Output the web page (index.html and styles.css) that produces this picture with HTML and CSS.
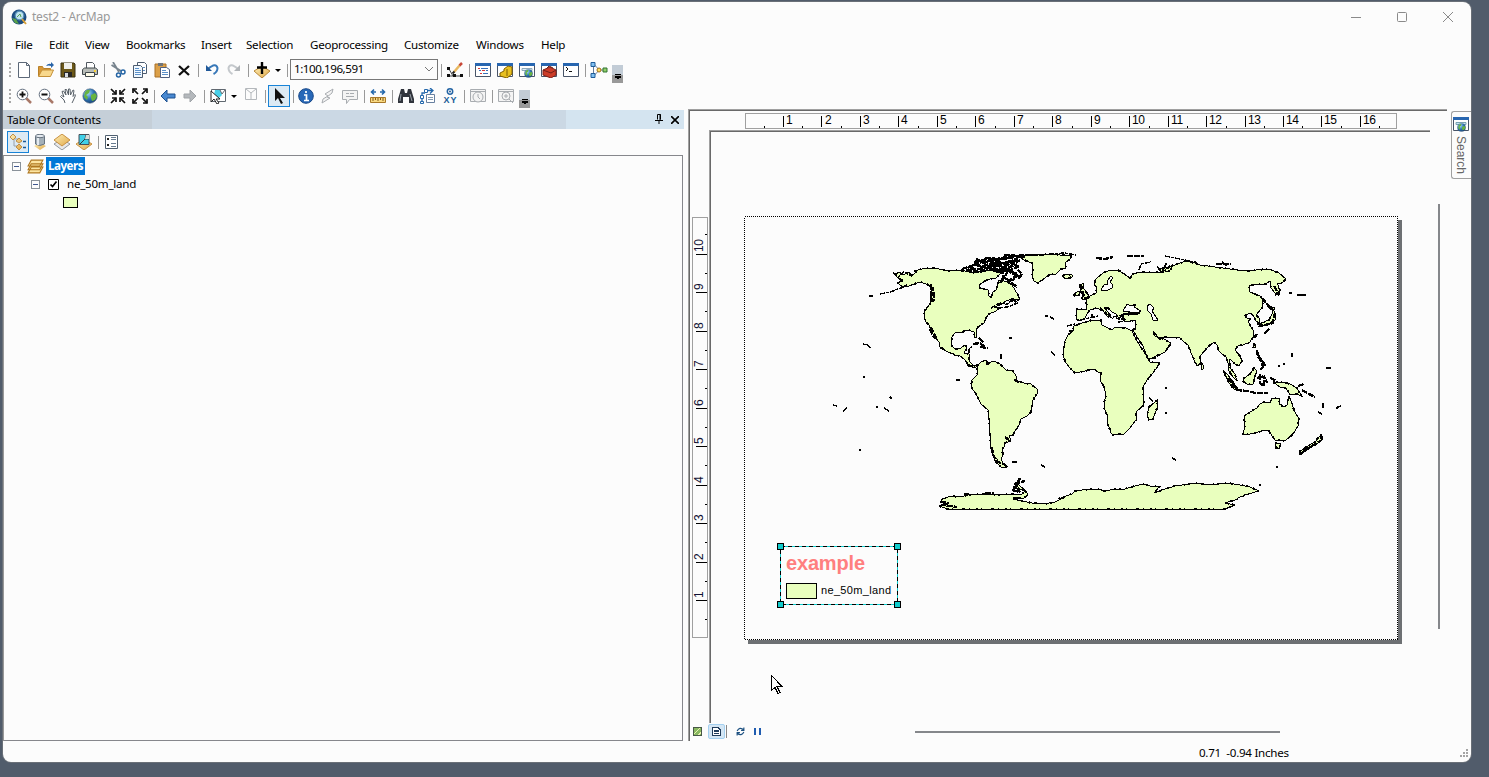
FILE: index.html
```html
<!DOCTYPE html>
<html lang="en">
<head>
<meta charset="utf-8">
<title>test2 - ArcMap</title>
<link rel="stylesheet" href="styles.css">
</head>
<body>
<svg class="defs" width="0" height="0">
  <defs>
    <linearGradient id="gold" x1="0" y1="0" x2="1" y2="1"><stop offset="0" stop-color="#fff0b8"/><stop offset="1" stop-color="#e0a848"/></linearGradient>
    <radialGradient id="globe" cx=".35" cy=".3" r=".8"><stop offset="0" stop-color="#a8dcf4"/><stop offset=".5" stop-color="#3076b8"/><stop offset="1" stop-color="#123a6a"/></radialGradient>
    <symbol id="i-globe" viewBox="0 0 16 16"><circle cx="8" cy="8" r="7.2" fill="url(#globe)" stroke="#486080" stroke-width=".6"/><path d="M3 4Q5 1 8 2L7 5 4 7 6 9 5 12 2 9zM9 7l4-2 2 3-2 4-3 1-1-3z" fill="#68b440"/></symbol>
    <symbol id="i-win" viewBox="0 0 16 16"><path d="M.5 1.500h15v13H.5z" fill="#fff" stroke="#485468"/><path d="M0 1h16v3H0z" fill="#2866b0"/></symbol>
  </defs>
</svg>
<div class="window">
  <header class="titlebar">
    <svg class="logo" viewBox="0 0 16 16"><circle cx="8" cy="8" r="7.500" fill="#1c4c80"/><path d="M1 9l3 5 4 1-3-5z" fill="#58a048"/><circle cx="8.500" cy="6.500" r="4.300" fill="#bfe4ee" stroke="#5890b8" stroke-width="1.200"/><path d="M6 8l3-3 1 3" fill="none" stroke="#58a058"/><path d="M11 10l4 5" stroke="#d8a038" stroke-width="2"/></svg>
    <h1 class="title">test2 - ArcMap</h1>
    <div class="controls">
      <svg viewBox="0 0 10 10"><path d="M0 5.500h10"/></svg>
      <svg viewBox="0 0 10 10"><rect x=".5" y=".5" width="9" height="9" rx="1"/></svg>
      <svg viewBox="0 0 10 10"><path d="M0 0l10 10M10 0L0 10"/></svg>
    </div>
  </header>
  <nav class="menu"><span>File</span><span>Edit</span><span>View</span><span>Bookmarks</span><span>Insert</span><span>Selection</span><span>Geoprocessing</span><span>Customize</span><span>Windows</span><span>Help</span></nav>

  <div class="toolbar">
    <i class="grip"></i>
    <b class="tool"><svg viewBox="0 0 16 16"><path d="M2.500.5h8l3 3v12h-11zM10.500.5v3h3" fill="#fff" stroke="#5c6878"/></svg></b>
    <b class="tool"><svg viewBox="0 0 16 16"><path d="M.5 14V4.500h4l1 2h7V8" fill="#d89838" stroke="#b88028"/><path d="M.5 14.500L4 8h11.500l-3 6.500z" fill="#f8d88c" stroke="#c49038"/><path d="M8 4q2-3 5-2V0l3 3-3 3V4q-2-1-5 0z" fill="#2864a8"/></svg></b>
    <b class="tool"><svg viewBox="0 0 16 16"><path d="M1 1h13l1 1v13H1z" fill="#6c5818" stroke="#383010"/><path d="M4 1h8v6H4z" fill="#f0f0ec"/><path d="M4 10h8v5H4z" fill="#282828"/><path d="M5 11h3v4H5z" fill="#d8dce0"/></svg></b>
    <b class="tool"><svg viewBox="0 0 16 16"><path d="M4.500 7V.5h6l2 2V7" fill="#fff" stroke="#505860"/><path d="M.5 7.500l2-1.500h11l2 1.500v5H.5z" fill="#b8bcb8" stroke="#40484c"/><path d="M3.500 10.500h9v4h-9z" fill="#fffce8" stroke="#40484c"/><path d="M12 8h2v2h-2z" fill="#f8d038"/></svg></b>
    <i class="sep"></i>
    <b class="tool"><svg viewBox="0 0 16 16"><path d="M3 0l6 10M1.500 3L11 9" stroke="#78848e" stroke-width="1.800"/><circle cx="8.500" cy="13" r="2" class="blue-line"/><circle cx="13" cy="10" r="2" class="blue-line"/></svg></b>
    <b class="tool"><svg viewBox="0 0 16 16"><path d="M5.500.5h7l2 2v9h-9z" fill="#fff" stroke="#4c5c70"/><path d="M1.500 3.500h7l2 2v10h-9z" fill="#f0f8ff" stroke="#4c5c70"/><path d="M3 6.500h4M3 8.500h6M3 10.500h6M3 12.500h6M11 5.500h2M11 8.500h2" stroke="#5c90c8"/></svg></b>
    <b class="tool"><svg viewBox="0 0 16 16"><path d="M1 2h11v13H1z" fill="#dca048" stroke="#a87028"/><path d="M4 1h5v3H4z" fill="#707478"/><path d="M6.500 5.500h6l3 2v8h-9z" fill="#fff" stroke="#506080"/><path d="M8 8.500h4M8 10.500h6M8 12.500h6" stroke="#5c90c8"/></svg></b>
    <b class="tool"><svg viewBox="0 0 16 16"><path d="M3 4l10 9M13 4L3 13" stroke="#111" stroke-width="2.300"/></svg></b>
    <i class="sep"></i>
    <b class="tool"><svg viewBox="0 0 16 16"><path d="M4 7Q12 0 13.500 6q0 4-4 6" fill="none" stroke="#3878b8" stroke-width="2"/><path d="M2 3v6h6z" fill="#205898"/></svg></b>
    <b class="tool"><svg viewBox="0 0 16 16"><path d="M12 7Q4 0 2.500 6q0 4 4 6" fill="none" stroke="#c4c8cc" stroke-width="2"/><path d="M14 3v6H8z" fill="#b0b4b8"/></svg></b>
    <i class="sep"></i>
    <b class="tool"><svg viewBox="0 0 16 16"><path d="M0 9l8-5 8 5-8 7z" fill="url(#gold)" stroke="#b88838"/><path d="M8 0v12M3 5.500h10" stroke="#000" stroke-width="2.400"/></svg></b>
    <b class="arrow"></b>
    <i class="sep"></i>
    <div class="combo"><span>1:100,196,591</span><svg viewBox="0 0 10 6"><path d="M1 1l4 4 4-4"/></svg></div>
    <i class="sep"></i>
    <b class="tool"><svg viewBox="0 0 16 16"><path d="M2 7l4 7M2 14h12" fill="none" stroke="#404448"/><path d="M0 5h3v3H0zM0 12h3v3H0zM6 12h3v3H6zM13 12h3v3h-3z" fill="#111"/><path d="M7 10l6-7" stroke="#e8b860" stroke-width="2.500"/><path d="M12.500 3.500L15 1" stroke="#c84838" stroke-width="2.500"/><path d="M5.500 11.500l2-2" stroke="#222" stroke-width="2"/></svg></b>
    <i class="sep"></i>
    <b class="tool"><svg viewBox="0 0 16 16"><use href="#i-win"/><path d="M3 6.500h2M7 8.500h3M5 11.500h2" stroke="#d83838"/><path d="M6 6.500h7M4 8.500h2M11 8.500h2M8 11.500h5" stroke="#3870b8"/></svg></b>
    <b class="tool"><svg viewBox="0 0 16 16"><use href="#i-win"/><path d="M3 11l4-2V7l4-3 4 1v7l-5 4-7-2z" fill="#e8c020" stroke="#806000"/><path d="M10 7v7" stroke="#806000"/></svg></b>
    <b class="tool"><svg viewBox="0 0 16 16"><use href="#i-win"/><path d="M3 6.500h10v2H3z" fill="#e0f0f8" stroke="#90a8b8"/><use href="#i-globe" x="5" y="7" width="9" height="9"/></svg></b>
    <b class="tool"><svg viewBox="0 0 16 16"><use href="#i-win"/><path d="M2 8l7-3 6 3v5l-5 3-8-3z" fill="#cc3c28" stroke="#802018"/><path d="M2 8l8 3 5-3M6 6l2-2 4 2" fill="none" stroke="#702018"/></svg></b>
    <b class="tool"><svg viewBox="0 0 16 16"><use href="#i-win"/><path d="M3 5l2 2-2 2M6 9.500h3" fill="none" stroke="#111"/></svg></b>
    <i class="sep"></i>
    <b class="tool wide"><svg viewBox="0 0 17 16"><path d="M3 5v7M4 3l5 5-5 5M9 8h6" fill="none" stroke="#667c98"/><path d="M.5.500h4v4h-4zM.5 11.500h4v4h-4z" fill="#80c0f0" stroke="#205c98"/><circle cx="8.500" cy="8" r="2" fill="#fce060" stroke="#a06c10"/><path d="M12.500 6h4v4h-4z" fill="#90d068" stroke="#307030"/></svg></b>
    <b class="overflow"></b>
  </div>

  <div class="toolbar second">
    <i class="grip"></i>
    <b class="tool"><svg viewBox="0 0 16 16"><path d="M10 10l5 5" stroke="#a87868" stroke-width="2.500"/><circle cx="6.500" cy="6.500" r="5.300" fill="#fff" stroke="#647080"/><path d="M3.500 6.500h6M6.500 3.500v6" stroke="#111" stroke-width="1.800"/></svg></b>
    <b class="tool"><svg viewBox="0 0 16 16"><path d="M10 10l5 5" stroke="#a87868" stroke-width="2.500"/><circle cx="6.500" cy="6.500" r="5.300" fill="#fff" stroke="#647080"/><path d="M3.500 6.500h6" stroke="#111" stroke-width="1.800"/></svg></b>
    <b class="tool"><svg viewBox="0 0 16 16"><path d="M5 15L4 12 .5 8.500l1-1L4 9 2 3.500 3.500 3 6 7 5 1.500h1.500L8.500 7V1H10l.5 6L13 2l1 .5-1 6 2-2 .5 1L13 13l-1 2" fill="#fff" stroke="#586068"/></svg></b>
    <b class="tool"><svg viewBox="0 0 16 16"><use href="#i-globe"/></svg></b>
    <i class="sep"></i>
    <b class="tool"><svg class="black" viewBox="0 0 16 16"><path d="M1 1l5 5M15 1l-5 5M1 15l5-5M15 15l-5-5"/><path d="M2 6h4V2M14 6h-4V2M2 10h4v4M14 10h-4v4"/></svg></b>
    <b class="tool"><svg class="black" viewBox="0 0 16 16"><path d="M1 1l5 5M15 1l-5 5M1 15l5-5M15 15l-5-5"/><path d="M1 5V1h4M15 5V1h-4M1 11v4h4M15 11v4h-4"/></svg></b>
    <i class="sep"></i>
    <b class="tool"><svg viewBox="0 0 16 16"><path d="M1 8l6-6v4h8v4H7v4z" fill="#4888d0" stroke="#1c5090"/></svg></b>
    <b class="tool"><svg viewBox="0 0 16 16"><path d="M14 8L8 2v4H2v4h6v4z" fill="#b4b8bc" stroke="#a0a4a8"/></svg></b>
    <i class="sep"></i>
    <b class="tool"><svg viewBox="0 0 16 16"><path d="M1.500 1.500h14v12h-14z" fill="#fff" stroke="#606870"/><path d="M5 2h5l2 5-4 4-4-4z" fill="#48d0e8"/><path d="M10 2l2 4 3-4" fill="none" stroke="#606870"/><path d="M1 3v11l3-3 3 5 2-1-3-4h4z" fill="#fff" stroke="#222"/></svg></b>
    <b class="arrow"></b>
    <b class="tool raised"><svg viewBox="0 0 16 16"><path d="M2.500 2.500h11v11h-11z M3 3l5 4 5-4M8 7v6" fill="none" stroke="#b4b8bc"/></svg></b>
    <i class="sep"></i>
    <b class="tool active"><svg viewBox="0 0 16 16"><path d="M4 0v13l3-3 3 6 2-1-3-5h5z" fill="#111"/></svg></b>
    <i class="sep narrow"></i>
    <b class="tool"><svg viewBox="0 0 16 16"><circle cx="8" cy="8" r="7.300" fill="#2868b8" stroke="#184888"/><path d="M8 3v2M6 7h2.500v5M6 12.500h5" fill="none" stroke="#fff" stroke-width="1.700"/></svg></b>
    <b class="tool"><svg class="dim" viewBox="0 0 16 16"><path d="M13 1L5 6l3 2-5 3-1 4 8-5-3-1 5-4z"/></svg></b>
    <b class="tool"><svg class="dim" viewBox="0 0 16 16"><path d="M.5 2.500h15v9h-8l-3 4v-4h-4zM4 5.500h3M8 5.500h4M4 8.500h8"/></svg></b>
    <i class="sep"></i>
    <b class="tool"><svg viewBox="0 0 16 16"><path d="M1 4h5M10 4h5M4 1.500L1.500 4 4 6.500M12 1.500L14.500 4 12 6.500" fill="none" stroke="#2468ac" stroke-width="1.600"/><path d="M.5 9.500h15v5H.5z" fill="#f8d880" stroke="#a87828"/><path d="M3 10v3M5.500 10v2M8 10v3M10.500 10v2M13 10v3" stroke="#805818"/></svg></b>
    <i class="sep"></i>
    <b class="tool"><svg viewBox="0 0 16 16"><path d="M3 1h3l1 4h2l1-4h3l3 10v4h-5V9H5v6H0v-4z" fill="#30343c"/><path d="M3 6L2 13M12 6l2 7" stroke="#98a0a8"/></svg></b>
    <b class="tool"><svg viewBox="0 0 16 16"><path d="M6.500 6.500h8v8h-8z" fill="#fff" stroke="#6880a0"/><path d="M2 14V5h3M7 2.500h5M10 0l3 2.500-3 3" fill="none" stroke="#2468ac" stroke-width="1.300"/><path d="M.5 7.500h3v3h-3zM.5 13.500h3v2h-3zM4.500 1.500h3v3h-3z" fill="#fff" stroke="#2468ac"/><path d="M8 9.500h5M8 11.500h5" stroke="#8098b0"/></svg></b>
    <b class="tool"><svg viewBox="0 0 16 16"><circle cx="8" cy="3.500" r="2.700" class="blue-line"/><circle cx="8" cy="3.500" r="1" fill="#205c98"/><text x="1.500" y="15" class="xy" textLength="13">XY</text></svg></b>
    <i class="sep"></i>
    <b class="tool"><svg class="dim" viewBox="0 0 16 16"><path d="M.5 1.500h15v12H.5zM.5 3.500h15"/><circle cx="8" cy="9" r="5"/><path d="M8 6v3l2 2"/></svg></b>
    <i class="sep"></i>
    <b class="tool"><svg class="dim" viewBox="0 0 16 16"><path d="M.5 1.500h15v12H.5zM.5 3.500h15"/><circle cx="8" cy="8" r="4"/><path d="M6 8h4M8 6v4M11 11l4 4"/></svg></b>
    <b class="overflow"></b>
  </div>

  <main class="work">
    <section class="toc">
      <div class="toc-head"><span>Table Of Contents</span>
        <svg class="pin" viewBox="0 0 8 10"><path d="M2.500 5.500v-5h3v5M5 0v6M0 6.500h8M4 6v4"/></svg>
        <svg class="close" viewBox="0 0 8 8"><path d="M0 0l8 8M8 0L0 8"/></svg>
      </div>
      <div class="toc-tools">
        <b class="tool active"><svg viewBox="0 0 16 16"><path d="M4 5v7h5M5 5h5" fill="none" stroke="#98a0a8"/><path d="M0 3l3-3 3 3-3 3zM6 7l3-3 3 3-3 2zM6 13l3-3 3 3-3 3z" fill="url(#gold)" stroke="#c09048"/><path d="M13 7.500h3M13 13.500h3" stroke="#185898" stroke-width="1.500"/></svg></b>
        <b class="tool"><svg viewBox="0 0 16 16"><path d="M2 12l6-3 6 3-6 4z" fill="url(#gold)"/><path d="M3.500 2v8q4 3 9 0V2" fill="#a4b0b8" stroke="#687480"/><ellipse cx="8" cy="2" rx="4.500" ry="1.700" fill="#e4eaf0" stroke="#687480"/><path d="M6 4v7" stroke="#e4eaf0" stroke-width="2"/></svg></b>
        <b class="tool"><svg viewBox="0 0 16 16"><path d="M0 10l8-5 8 5-8 6z" fill="#e8e8e8" stroke="#9098a0"/><path d="M0 6l8-6 8 6-8 6z" fill="url(#gold)" stroke="#c89040"/></svg></b>
        <b class="tool"><svg viewBox="0 0 16 16"><path d="M0 10l8-5 8 5-8 6z" fill="url(#gold)" stroke="#c89040"/><path d="M3 .5h10v10H3z" fill="#40d0e8" stroke="#485058"/><path d="M10 1L9 5l-5 5M13 5l-4 0" fill="none" stroke="#303840"/><path d="M10 1h3v4H9z" fill="#d8dcd8"/></svg></b>
        <i class="sep narrow"></i>
        <b class="tool"><svg viewBox="0 0 16 16"><path d="M2.500 1.500h12v13h-12z" fill="#fff" stroke="#506070"/><path d="M4 4h2v2H4zM4 10h2v2H4z" fill="#222"/><path d="M8 3.500h5M8 5.500h5M8 9.500h5M8 12.500h5" stroke="#687c90"/></svg></b>
      </div>
      <div class="tree">
        <div class="node"><i class="expander"></i><svg class="stack" viewBox="0 0 16 14"><path d="M4 7.500h11L12 13H1zM4 4.500h11L12 10H1zM4 1h11l-3 5.500H1z" fill="#fce4a0" stroke="#b07820"/></svg><span class="chosen">Layers</span></div>
        <div class="node child"><i class="expander"></i><svg class="check" viewBox="0 0 11 11"><path d="M.5.5h10v10H.5z" fill="#fff" stroke="#000"/><path d="M2.500 5.500l2 2 4-5" fill="none" stroke="#000" stroke-width="1.700"/></svg><span>ne_50m_land</span></div>
        <div class="node symbol"><i class="swatch"></i></div>
      </div>
    </section>

    <section class="view">
      <svg class="ruler-x" viewBox="690 111 740 19">
        <rect x="745.500" y="113.500" width="651" height="15"/>
        <path class="major-x" d="M783 121.500H1390"/><path class="minor-x" d="M764 126.500H1380"/>
        <text x="786" y="124">1</text><text x="825" y="124">2</text><text x="863" y="124">3</text><text x="901" y="124">4</text><text x="940" y="124">5</text><text x="978" y="124">6</text><text x="1017" y="124">7</text><text x="1055" y="124">8</text><text x="1094" y="124">9</text><text x="1132" y="124">10</text><text x="1171" y="124">11</text><text x="1209" y="124">12</text><text x="1248" y="124">13</text><text x="1286" y="124">14</text><text x="1324" y="124">15</text><text x="1363" y="124">16</text>
      </svg>
      <svg class="ruler-y" viewBox="690 130 19 593">
        <rect x="692.500" y="217.500" width="15" height="420"/>
        <path class="major-y" d="M701.500 601V240"/><path class="minor-y" d="M706 620V230"/>
        <g transform="translate(703 0) rotate(-90)"><text x="-598">1</text><text x="-560">2</text><text x="-521">3</text><text x="-483">4</text><text x="-444">5</text><text x="-406">6</text><text x="-367">7</text><text x="-329">8</text><text x="-290">9</text><text x="-252">10</text></g>
      </svg>
      <div class="canvas">
        <svg viewBox="711 132 719 591" width="719" height="591">
          <rect x="748" y="220" width="654" height="424" fill="#6d7073"/>
          <rect x="744.500" y="216.500" width="653" height="423" fill="#fcfcfc" stroke="#000" stroke-dasharray="1 1"/>
          <g class="map">
            <g id="land">
              <path d="M902 286L897 283 903 281 897 277 895 274 899 272 903 275 908 272 912 275 917 272 914 271 922 269 930 268 939 269 948 271 958 270 965 271 973 273 985 271 995 269 1001 273 996 278 990 279 985 281 979 285 980 288 988 290 989 296 991 297 993 292 996 290 998 284 998 280 1004 281 1008 282 1012 285 1015 290 1018 295 1020 300 1012 299 1006 301 1002 304 994 307 1000 307 996 311 989 314 986 318 984 323 978 327 976 331 977 337 975 338 974 332 968 330 962 332 955 333 952 337 951 345 955 349 961 348 965 345 967 348 964 353 969 354 969 361 973 365 979 365 974 368 968 364 964 359 960 356 955 355 946 351 940 347 939 342 934 336 931 330 929 325 926 322 924 317 925 310 930 304 931 300 930 294 932 289 929 285 920 282 914 284 909 286z"/>
              <path d="M1020 257L1029 255 1045 254 1060 255 1072 255 1070 259 1065 263 1066 268 1061 269 1056 274 1049 275 1042 280 1038 283 1034 281 1032 276 1033 270 1032 263 1024 260zM1062 276l5-2 5 1 0 2-6 2z"/>
              <path d="M977 366L981 362 986 360 988 363 994 361 1000 364 1006 370 1013 371 1016 376 1016 381 1024 383 1031 384 1037 389 1037 394 1033 400 1031 412 1027 416 1021 419 1019 425 1015 431 1013 435 1009 436 1011 440 1008 442 1004 443 1004 447 1002 450 1003 455 1001 459 1003 463 1007 467 1001 467 995 461 991 449 990 435 989 420 988 410 981 404 976 394 971 387 972 380 977 375z"/>
              <path d="M1079 324L1074 326 1073 331 1068 335 1065 341 1064 348 1063 356 1066 363 1070 368 1075 373 1085 371 1094 369 1098 372 1101 373 1100 380 1104 387 1106 395 1104 403 1104 408 1107 415 1108 424 1111 433 1113 435 1124 434 1130 428 1136 420 1136 412 1144 405 1143 394 1143 387 1147 380 1153 373 1158 366 1160 362 1150 362 1148 359 1145 353 1140 346 1135 337 1132 331 1126 328 1115 327 1112 330 1102 325 1101 320 1092 320z"/>
              <path d="M1133 330L1137 337 1143 346 1148 359 1152 358 1165 352 1171 343 1164 339 1158 337 1153 331 1155 336 1160 339 1166 337 1180 338 1184 342 1188 345 1191 353 1195 362 1197 366 1200 364 1200 356 1208 347 1214 342 1217 345 1219 351 1222 354 1226 357 1228 363 1229 371 1233 377 1237 381 1235 374 1231 369 1229 361 1230 359 1235 364 1239 366 1242 361 1240 356 1235 350 1238 346 1243 345 1250 342 1253 337 1254 332 1250 325 1248 321 1251 319 1247 318 1245 315 1251 313 1254 317 1256 321 1259 323 1260 319 1256 315 1262 308 1263 300 1260 296 1250 292 1249 286 1255 284 1266 284 1270 281 1271 288 1275 293 1279 295 1280 290 1277 283 1282 283 1286 279 1279 273 1269 269 1256 270 1245 271 1230 269 1215 267 1200 265 1195 263 1185 261 1178 264 1168 267 1158 269 1162 272 1150 272 1140 272 1133 274 1130 278 1118 270 1110 270 1103 273 1096 279 1094 284 1097 288 1096 293 1090 296 1086 299 1087 309 1076 309 1076 319 1080 321 1085 318 1087 314 1090 310 1097 308 1103 311 1108 317 1111 316 1104 307 1108 308 1112 312 1116 314 1119 319 1122 315 1124 313 1140 313 1138 314 1122 315 1122 319 1126 322 1135 320 1136 328z"/>
              <path d="M1243 435L1245 425 1244 416 1250 412 1257 408 1260 404 1264 402 1270 403 1272 398 1280 399 1279 404 1284 407 1287 405 1289 396 1291 401 1294 410 1299 419 1298 426 1293 434 1285 441 1275 440 1272 436 1269 431 1265 430 1258 432 1250 434zM1275 443l6 1-2 5-3-1zM1320 436l3 3-5 4-8 5-11 7 0-3 9-6 8-5 2-3z"/>
              <path d="M1223 371l5 4 5 7 5 7-4 0-5-6zM1243 379l7-5 4-6 3 3-2 5-2 8-6 0-4-3zM1273 382L1281 382 1290 384 1297 388 1299 392 1303 397 1297 394 1290 395 1286 388 1280 387zM1155 402l3-3-1 9-4 11-4 1-2-5 2-8zM1201 363l2 2 0 4-2 0z"/>
              <path d="M1080 285l4-2-1 4 3 5 4 5-3 2-5 0 1-4-3-4zM1075 293l4-2 0 4-5 1zM1273 309l2 4 0 7-4 3-6 2-6 2 2-4 8-3 3-6zM1270 307l4 0 1 2-5 1zM1253 344l3 1-1 3-2-1z"/>
              <path d="M941 500L950 496 960 497 968 495 985 494 998 495 1012 494 1022 494 1025 491 1018 488 1013 488 1018 484 1021 487 1025 490 1028 495 1024 498 1013 499 1022 501 1032 503 1044 504 1055 502 1065 497 1058 499 1072 494 1075 491 1082 490 1098 489 1105 491 1115 489 1125 489 1135 486 1143 484 1150 486 1160 486 1154 493 1165 489 1175 486 1190 484 1198 483 1206 485 1217 484 1228 483 1240 485 1250 487 1259 491 1248 494 1240 497 1235 500 1225 503 1235 505 1225 509 948 509 939 506 945 504z"/>
            </g>
            <use href="#land" class="coast"/>
            <g class="sea">
              <path d="M1123 311l4-7 4 2 5-2-2 3 7 4-3 2-8-1zM1147 306l3-2 4 4-2 3 6 9-5 0-2-6-4-4zM1111 276l-4 5 1 3-4 1-3 5 7 0 4-2 0-4-2-2 3-4z"/>
            </g>
            <path class="rough thick" d="M962 269l12-4 9 1 10-3 7 2 11-3 7-3-9-1-12 2-12 1-10 3-7 4 9 1 12-1 8 4 12-3 4-5 5 2M974 262l13-3 10 0 14-3 14 1M980 267l18-1 13 4 8-4M989 260l11-1-8 6 22-4-18 11 19-7M1000 273l7-3 8 5 4 3 3-4-4-4M1005 275l-5 8M1008 271l-4 7 7 3M1000 261l4 17M1011 260l-8 9 15 5-9 7 8 6"/>
            <path class="rough thick" d="M966 270l14 2 8-4 10 1M976 259l8 4 7-3 8 2M985 258l15 1 9-1M990 263l6 5M1004 255l16 1M1012 281l4-5 5 1M1005 262l15-2-8 5"/>
            <path class="rough" d="M869 296l4 0M880 294l10-2 11-4 6-3M893 273l6 4 4-5 9 4M991 308l8-5 8 1 5-4 6 3-11 4-8 1M1011 301l8-1M969 353v-4l3-2M1019 255h22l23-2 12 2M1165 256l15 3 15 3 3 3M1139 270l2-6 10-2M1157 267l6 5 7-1 3-6-11 7 5-10M1080 320l18-4M1100 308l8 6 4 5M1113 317l9-2 3 5-9-2M1118 322l7-1M1067 326l8-2M1092 314v4"/>
            <path class="rough thick" d="M931 284v14l3 3-1-14M931 299l2 3M930 329l3 7 4 3M931 327l6 13M973 344l7-1 6 5M980 347l8 1M979 338l5 5M1096 258l9 1 8-2M1127 256h17M1216 264l15 0M1222 262l5 4M1080 284l3 9 2 5 5-1M1275 295l4-3"/>
            <path class="rough thick" d="M1236 390l12 1 7 2 13 0M1228 378l6 8 5 5M1257 350l1 7 4 5 1 6M1258 355l7 10-5 5M1260 374v9l4 3 0-10 3 7M1257 378l8-2M1270 378l5 2 3 3M1298 386l6-2M1302 390l5 3 8 4M1257 324l8 1 8-2 2-11M1262 298l9 11M1254 338l3-4M1274 286l5 9M1019 498l-7 0M940 502l9 1-7 2 15 2M985 493h9M1012 490l8 2-4-7M1014 484l11-3M1020 478l-5 10M964 494h5M992 447l1 8 5 7 8 3M1005 437l4 3M1300 454l10-7 10-6M1321 434l1 7M967 365l8 2M986 364h3M1014 380l5 2"/>
            <path class="spots" d="M863 344l5 1 2 3M863 377h2M956 380h4M833 405l4 1M843 411l4-3M876 407h2M884 408l5 3M890 397l2 2M1045 316h3M1050 317l4 2M1051 352l4 3M861 450h-2M1012 462h5M1041 465l4 2M1172 458l4 2M1149 398l4 3M1165 388h2M1165 413h2M1289 293h3M1297 295h9M1292 353v4M1326 368h5M1318 412l4 2M1323 403v5M1336 409l2-2 3-1M1276 467h2M1278 366h2M1283 364h2M1009 338h3M1001 354v5M1260 484v2M1269 329l-5 5M1069 331h4M1152 358h4"/>
          </g>
          <g class="legend">
            <rect x="780.500" y="546.500" width="117" height="58" class="sel-base"/><rect x="780.500" y="546.500" width="117" height="58" class="sel-dash"/>
            <path class="handle" d="M777.500 543.500h6v6h-6zM894.500 543.500h6v6h-6zM777.500 601.500h6v6h-6zM894.500 601.500h6v6h-6z"/>
            <text x="786" y="570" class="heading" textLength="79">example</text>
            <rect x="786.500" y="583.500" width="30" height="15" class="patch"/>
            <text x="821" y="594" class="label" textLength="70">ne_50m_land</text>
          </g>
          <path d="M771.500 675.500v15l3.500-3 3 6 2-1-3-6h5z" fill="#fff" stroke="#000"/>
        </svg>
      </div>
      <div class="scroll-y"></div>
      <div class="viewbar">
        <svg viewBox="0 0 8 8" class="small"><path d="M.5.5h7v7h-7z" fill="#88b860" stroke="#485848"/><path d="M1 6l5-5M5 7l2-2" stroke="#e8f0b0"/></svg>
        <span class="mode"><svg viewBox="0 0 8 8" class="small"><path d="M.5.5h5l2 2v5h-7z" fill="#fff" stroke="#203c5c"/><path d="M2 3.500h4M2 5.500h4" stroke="#203c5c"/></svg></span>
        <i class="bar-line"></i>
        <svg viewBox="0 0 8 8" class="small soft"><path d="M1 3.500Q3-.5 7 2.500M7 .5v2.500H4.500M7 4.500Q5 8.500 1 5.500M1 7.500V5h2.500" fill="none" stroke="#1c5080"/></svg>
        <svg viewBox="0 0 8 8" class="small pause"><path d="M1 1h2v6H1zM5 1h2v6H5z" fill="#205cb0"/></svg>
        <i class="scroll-x"></i>
      </div>
    </section>
    <aside class="search"><svg viewBox="0 0 16 16"><use href="#i-win"/><path d="M3 6.500h10v2H3z" fill="#c8e8f0" stroke="#78a0b0"/><use href="#i-globe" x="4" y="7" width="9" height="9"/></svg><span>Search</span></aside>
  </main>
  <footer class="status"><span>0.71&nbsp; -0.94 Inches</span><svg viewBox="0 0 9 9"><path d="M6 0h2v2H6zM3 3h2v2H3zM6 3h2v2H6zM0 6h2v2H0zM3 6h2v2H3zM6 6h2v2H6z"/></svg></footer>
</div>
</body>
</html>
```

FILE: styles.css
```css
* { box-sizing: border-box; }
body { margin: 0; height: 777px; overflow: hidden; padding: 2px 0 0 3px; background: #515c6b; font: 11.600px/16px "Noto Sans", "Open Sans", sans-serif; letter-spacing: -.25px; color: #000; }
.defs { display: block; height: 0; }
.window { display: flex; flex-direction: column; width: 1468px; height: 760px; background: #fcfcfc; border-radius: 8px; box-shadow: 0 0 0 1px #6a7078; overflow: hidden; }
.titlebar { display: flex; align-items: center; height: 29px; padding-left: 8px; }
.logo { width: 16px; height: 16px; margin-right: 5px; }
.title { margin: 0; font-size: 12px; font-weight: 400; color: #999; letter-spacing: -.22px; }
.controls { display: flex; gap: 36px; margin-left: auto; margin-right: 18px; }
.controls svg { width: 10px; height: 10px; fill: none; stroke: #8a8a8a; }
.menu { display: grid; grid-template-columns: 34px 36px 41px 75px 45px 64px 94px 72px 65px 40px; height: 28px; align-items: center; padding-left: 12px; }
.toolbar { display: flex; height: 26px; align-items: flex-start; padding-left: 5px; }
.toolbar.second { height: 24px; }
.grip { width: 5px; height: 16px; margin-top: 4px; background: repeating-linear-gradient(#a8a8a8 0 2px, transparent 2px 4px) 1px 0 / 2px 100% no-repeat; }
.tool { display: flex; flex: none; width: 22px; height: 22px; align-items: center; justify-content: center; }
.tool svg { width: 16px; height: 16px; }
.tool.wide svg { width: 18px; }
.tool.active { background: #dceaf4; border: 1px solid #1883d7; }
.tool.raised { padding-bottom: 4px; }
.sep { flex: none; width: 6px; height: 13px; margin-top: 5px; background: linear-gradient(#999, #999) 3px 0 / 1px 100% no-repeat; }
.sep.narrow { width: 5px; }
.arrow { width: 11px; height: 22px; background: none; }
.arrow::before { content: ""; display: block; margin: 10px 0 0 2px; width: 0; border: 3px solid transparent; border-top-color: #000; border-bottom: 0; }
.combo { display: flex; width: 148px; height: 21px; align-items: center; justify-content: space-between; padding: 0 3px 1px 3px; border: 1px solid #777; letter-spacing: -.45px; }
.combo svg { width: 10px; height: 6px; fill: none; stroke: #777; }
.overflow { width: 11px; height: 18px; margin: 6px 0 0 2px; background: linear-gradient(#c2ccd6 10px, #999 10px); }
.second .overflow { margin: 5px 0 0 2px; }
.overflow::before { content: ""; display: block; width: 6px; height: 6px; margin: 9px 0 0 3px; background: linear-gradient(#000 0 0) 0 0 / 100% 1px no-repeat, linear-gradient(#000 0 0) 0 2px / 6px 2px no-repeat, linear-gradient(#000 0 0) 2px 4px / 2px 1px no-repeat; }
.blue-line { fill: none; stroke: #2464a4; stroke-width: 1.500; }
.black path { fill: none; stroke: #111; stroke-width: 1.700; }
.dim { fill: #f4f4f4; stroke: #a8acb0; }
.xy { font: bold 9px "Liberation Sans", sans-serif; fill: #205c98; letter-spacing: 0; }

.work { display: flex; height: 632px; }
.toc { display: flex; flex-direction: column; width: 681px; margin-top: 1px; }
.toc-head { display: flex; height: 19px; align-items: center; padding-left: 4px; padding-right: 5px; background: linear-gradient(90deg, #c5cfd8 149px, #cbd8e4 149px 563px, #d4e4f0 563px); letter-spacing: -.18px; }
.toc-head svg { fill: none; stroke: #000; }
.toc-head .pin { width: 8px; height: 10px; margin-left: auto; margin-right: 8px; margin-bottom: 1px; }
.toc-head .close { width: 8px; height: 8px; stroke-width: 1.600; }
.toc-tools { display: flex; height: 26px; align-items: center; padding-left: 4px; }
.toc-tools .sep { margin-top: 0; }
.tree { width: 680px; height: 586px; padding: 1px 0 0 7px; border: 1px solid #86878c; border-left-color: #999; }
.node { display: flex; height: 18px; align-items: center; }
.node.child { padding-left: 20px; }
.node.symbol { padding-left: 52px; }
.expander { width: 9px; height: 9px; margin: 1px 6px 0 1px; border: 1px solid #8a929a; background: linear-gradient(#405890, #405890) center / 5px 1px no-repeat; }
.child .expander { margin-left: 0; margin-right: 8px; }
.stack { width: 17px; height: 15px; margin-right: 2px; }
.chosen { padding: 1px 2px; background: #0078d7; color: #fff; font-weight: 700; letter-spacing: -.5px; }
.check { width: 11px; height: 11px; margin-right: 8px; }
.child span { letter-spacing: -.25px; }
.swatch { width: 15px; height: 11px; background: #e9ffbe; border: 1px solid #000; }

.view { display: grid; grid-template: 19px 593px 18px / 19px 721px 17px; width: 759px; height: 632px; margin-left: 4px; padding: 1px 0 0 1px; border: solid #a0a0a0; border-width: 1px 0 0 1px; box-shadow: inset 1px 1px 0 #696969; }
.ruler-x { grid-column: 1 / 4; grid-row: 1; width: 740px; height: 19px; }
.ruler-y { grid-column: 1; grid-row: 2; width: 19px; height: 593px; }
.view rect, .view path { shape-rendering: crispEdges; }
.view .soft path { shape-rendering: auto; }
.ruler-x rect, .ruler-y rect { fill: none; stroke: #a0a0a0; }
.ruler-x text, .ruler-y text { font: 12px "Liberation Sans", Arial, sans-serif; letter-spacing: -.4px; }
.ruler-y text { fill: #113; }
.ruler-x path, .ruler-y path { fill: none; stroke: #000; stroke-dasharray: 1 37.460; }
.major-x, .major-y { stroke-width: 11px; }
.minor-x { stroke-width: 2px; }
.minor-y { stroke-width: 2px; }
.canvas { grid-column: 2; grid-row: 2; border: solid #a0a0a0; border-width: 1px 0 0 1px; box-shadow: inset 1px 1px 0 #696969; padding: 1px 0 0 1px; overflow: hidden; }
.canvas svg { display: block; }
.map { fill: #e9ffbe; stroke: #000; stroke-width: 1px; stroke-linejoin: bevel; }
.map .sea { fill: #fcfcfc; }
.map .coast { fill: none; stroke-width: 2px; stroke-dasharray: 2 6 1 4 3 9 1 3; }
.map .rough, .map .spots { fill: none; }
.map .rough { stroke-width: 1.500px; stroke-dasharray: 5 1 3 1; }
.map .rough.thick { stroke-width: 2.300px; stroke-dasharray: 6 1; }
.map .spots { stroke-width: 1.500px; }
.sel-base { fill: none; stroke: #10d0d0; }
.sel-dash { fill: none; stroke: #000; stroke-dasharray: 4 3; }
.handle { fill: #10cccc; stroke: #000; }
.heading { font: bold 20px "Liberation Sans", Arial, sans-serif; fill: #ff7f7f; letter-spacing: 0; }
.patch { fill: #e9ffbe; stroke: #000; }
.label { font: 11px "Liberation Sans", Arial, sans-serif; letter-spacing: 0; }
.scroll-y { grid-column: 3; grid-row: 2; width: 2px; height: 425px; margin: 74px 0 0 8px; background: #85878b; }
.viewbar { grid-column: 1 / 4; grid-row: 3; display: flex; height: 17px; align-items: center; padding-left: 3px; }
.small { flex: none; width: 9px; height: 9px; }
.mode { display: flex; width: 17px; height: 15px; margin-left: 6px; align-items: center; justify-content: center; background: #d4e6f4; border: 1px solid #a4d0f0; border-radius: 2px; }
.bar-line { width: 1px; height: 13px; margin: 0 9px 0 1px; background: #888; }
.pause { margin-left: 8px; }
.scroll-x { width: 365px; height: 2px; margin-left: 153px; background: #85878b; }
.search { display: flex; flex-direction: column; width: 20px; height: 68px; margin: 2px 0 0 4px; padding: 4px 1px 0 0; align-items: center; border: solid #a0a0a0; border-width: 1px 0 1px 1px; border-radius: 3px 0 0 3px; }
.search svg { width: 16px; height: 16px; }
.search span { writing-mode: vertical-rl; font: 12px/16px "Liberation Sans", Arial, sans-serif; letter-spacing: 0; color: #666; margin-top: 4px; }
.status { display: flex; height: 21px; align-items: center; padding-right: 2px; }
.status span { margin: 2px 0 0 1196px; letter-spacing: -.28px; }
.status svg { width: 9px; height: 9px; margin: 4px 0 0 auto; fill: #a4a4a4; }
```
